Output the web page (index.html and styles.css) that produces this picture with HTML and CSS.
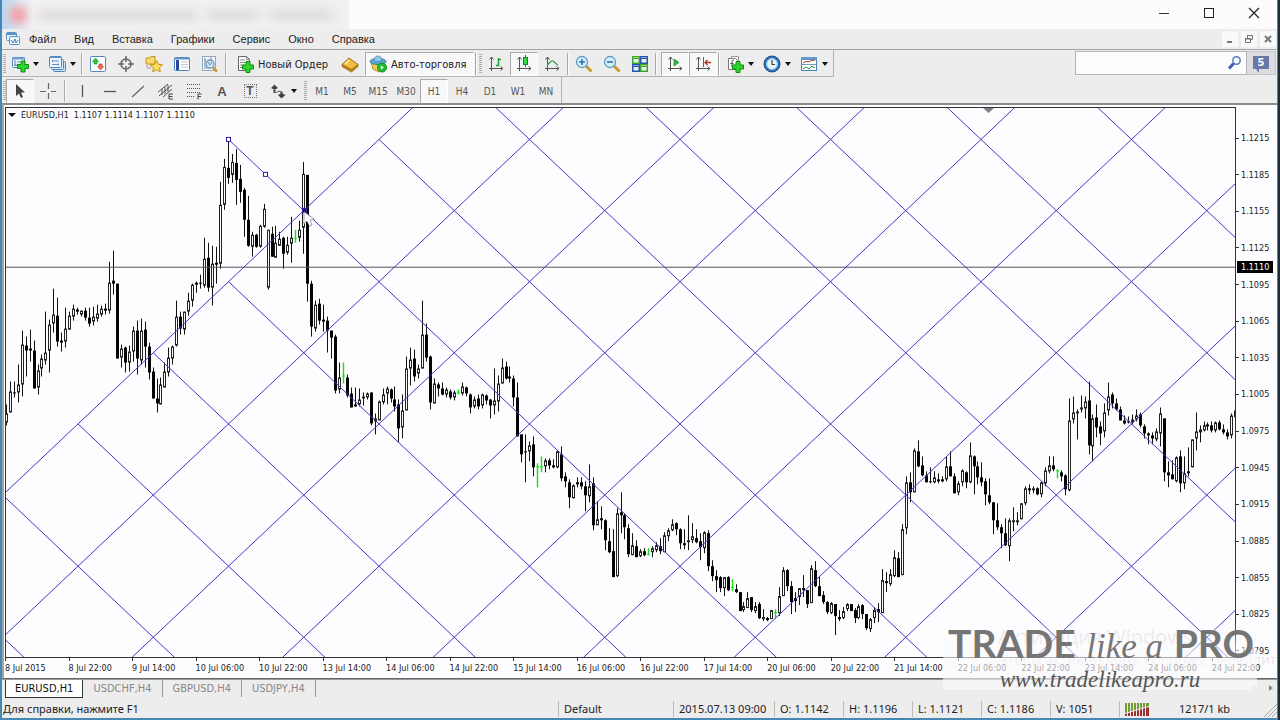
FILE: index.html
```
<!DOCTYPE html>
<html lang="ru">
<head>
  <meta charset="UTF-8">
  <title>EURUSD,H1</title>
  <link rel="stylesheet" href="styles.css">
</head>
<body>
  <div class="window">
    <header class="titlebar">
      <div class="title-blur"><i class="blur-logo"></i><i class="blur-text"></i><i class="blur-text short"></i><i class="blur-text mid"></i></div>
      <div class="win-buttons">
        <button aria-label="Свернуть"><svg width="12" height="12"><path d="M1 6.500h10" stroke="#333" fill="none"/></svg></button>
        <button aria-label="Развернуть"><svg width="12" height="12"><rect x="1.500" y="1.500" width="9" height="9" stroke="#222" fill="none"/></svg></button>
        <button aria-label="Закрыть"><svg width="12" height="12"><path d="M1 1l10 10M11 1L1 11" stroke="#222" stroke-width="1.200" fill="none"/></svg></button>
      </div>
    </header>

    <nav class="menu">
      <svg class="menu-logo" width="16" height="16" viewBox="0 0 16 16"><rect x="1.500" y="1.500" width="10" height="8" rx="1" fill="#eef6fd" stroke="#5b93c9"/><path d="M1 3h11" stroke="#5b93c9" stroke-width="2"/><rect x="4.500" y="5.500" width="10" height="8" rx="1" fill="#eef6fd" stroke="#5b93c9"/><path d="M6 9l2 3 2-4 1 4 2-3" stroke="#4a83bb" fill="none"/></svg>
      <a href="#">Файл</a><a href="#">Вид</a><a href="#">Вставка</a><a href="#">Графики</a><a href="#">Сервис</a><a href="#">Окно</a><a href="#">Справка</a>
      <div class="mdi-buttons">
        <button aria-label="Свернуть окно"><svg width="10" height="10"><path d="M2 8h5" stroke="#777" stroke-width="2"/></svg></button>
        <button aria-label="Восстановить окно"><svg width="10" height="10"><path d="M3.500 4V1.500h5v4H7M1.500 4.500h5v4h-5zM3 1.500h6M1 5h6" stroke="#777" fill="none"/></svg></button>
        <button aria-label="Закрыть окно"><svg width="10" height="10"><path d="M2 2l6 6M8 2L2 8" stroke="#777" stroke-width="2"/></svg></button>
      </div>
    </nav>

    <div class="toolrow">
      <div class="toolbar">
        <i class="grip"></i>
        <button class="tool drop" aria-label="Новый график"><svg width="18" height="18" viewBox="0 0 18 18"><rect x="1.500" y="2.500" width="12" height="10" rx="1" fill="#eef6fd" stroke="#4e86bd"/><path d="M1 3.500h13" stroke="#6ea3d4" stroke-width="2"/><path d="M4 5v6M3 10h7M6 7h3" stroke="#5b86ad" fill="none"/><path d="M10 6h4v3.500h3.500v4H14V17h-4v-3.500H6.500v-4H10z" fill="#2fd42f" stroke="#0c8c12"/></svg><i class="caret"></i></button>
        <button class="tool drop" aria-label="Профили"><svg width="18" height="18" viewBox="0 0 18 18"><rect x="5.500" y="6.500" width="12" height="10" rx="1" fill="#cfe3f5" stroke="#4e86bd"/><rect x="3.500" y="4.500" width="12" height="10" rx="1" fill="#dcebf8" stroke="#4e86bd"/><rect x="1.500" y="1.500" width="12" height="11" rx="1" fill="#eef6fd" stroke="#4e86bd"/><path d="M2 2.500h11M4 6h7M4 9.500h7M4.500 5v2M10.500 8.500v2" stroke="#5f93c6"/></svg><i class="caret"></i></button>
        <i class="sep"></i>
        <button class="tool" aria-label="Обзор рынка"><svg width="18" height="18" viewBox="0 0 18 18"><rect x="1.500" y="1.500" width="15" height="15" rx="1" fill="#fafdff" stroke="#4e86bd"/><path d="M6.500 3l3 3.500H8V9H5V6.500H3.500z" fill="#35c435" stroke="#158a1d" stroke-width=".6"/><path d="M11.500 15l-3-3.500H10V9h3v2.500h1.500z" fill="#f06a4a" stroke="#c22d15" stroke-width=".6"/></svg></button>
        <button class="tool" aria-label="Окно данных"><svg width="18" height="18" viewBox="0 0 18 18"><circle cx="9" cy="9" r="5" fill="none" stroke="#666" stroke-width="1.500"/><path d="M9 1v6M9 11v6M1 9h6M11 9h6" stroke="#666" stroke-width="1.500"/></svg></button>
        <button class="tool" aria-label="Навигатор"><svg width="18" height="18" viewBox="0 0 18 18"><path d="M1 3h4l1-1.500h4V9H1z" fill="#f8dc6a" stroke="#c09420"/><path d="M1 11h2M5 11h2M2 13h4" stroke="#999"/><path d="M11.500 5.500l1.900 3.800 4.100.5-3 2.900.8 4.100-3.800-2-3.700 2 .7-4.100-3-2.900 4.200-.5z" fill="#ffe05a" stroke="#c48f16"/></svg></button>
        <button class="tool" aria-label="Терминал"><svg width="18" height="18" viewBox="0 0 18 18"><rect x="1.500" y="2.500" width="15" height="13" rx="1" fill="#fff" stroke="#4a82bc"/><path d="M2 3.500h14" stroke="#5e94ca" stroke-width="2"/><path d="M4.500 5v10" stroke="#28489a" stroke-width="3"/><path d="M8 7h7M8 9.500h7M8 12h7" stroke="#b7c8dc"/></svg></button>
        <button class="tool" aria-label="Тестер стратегий"><svg width="18" height="18" viewBox="0 0 18 18"><rect x="1.500" y="1.500" width="13" height="14" fill="#f2f6fa" stroke="#91a8bd"/><path d="M4 3v9M3 5h2M10 2v4M3 13h5" stroke="#768da2"/><circle cx="9" cy="9" r="4" fill="#cfe8f8" stroke="#6d93b5" stroke-width="1.300"/><path d="M7 7l2 3 2-3" stroke="#6688a5" fill="none"/><path d="M12 12.500l4 4" stroke="#c9982d" stroke-width="2.500"/></svg></button>
        <i class="sep"></i>
        <button class="tool wide"><svg width="18" height="18" viewBox="0 0 18 18"><path d="M2.500 1.500h8l3 3v11h-11z" fill="#fff" stroke="#666"/><path d="M10.500 1.500v3h3M4 5h5M4 7.500h7M4 10h4M4 12.500h3" stroke="#888" fill="none"/><path d="M10 6.500h4V10h3.500v4H14v3.500h-4V14H6.500v-4H10z" fill="#2fd42f" stroke="#0c8c12"/></svg>Новый Ордер</button>
        <button class="tool" aria-label="MetaEditor"><svg width="18" height="18" viewBox="0 0 18 18"><path d="M1 9.500L8 3l9 6.500-6.500 6.500z" fill="#eebf42" stroke="#9c6b12"/><path d="M1 9.500l9.500 5 6.500-5v2L10.500 17 1 11.500z" fill="#c5871e" stroke="#8d5d10" stroke-width=".7"/><path d="M4 9l4.500-4" stroke="#fff0a6" stroke-width="1.500"/></svg></button>
        <button class="tool wide pressed auto"><svg width="18" height="18" viewBox="0 0 18 18"><path d="M2 7l2 7 6 3 5-8z" fill="#f1cd49" stroke="#b98e21"/><ellipse cx="9" cy="6.500" rx="8" ry="3" fill="#5fa8d6" stroke="#3679a8"/><path d="M5 5.500c0-6 8-6 8 0-2 1.500-6 1.500-8 0z" fill="#8cc9ec" stroke="#3e87b7" stroke-width=".8"/><circle cx="13" cy="12.500" r="4.500" fill="#22bd31" stroke="#0d8a1c"/><path d="M11.800 10.500l3 2-3 2z" fill="#fff"/></svg>Авто-торговля</button>
        <i class="sep"></i>
        <i class="grip"></i>
        <button class="tool" aria-label="Бары"><svg width="18" height="18" viewBox="0 0 18 18"><path d="M4.500 2v14M2 13.500h14M2.500 4.500l2-2.500 2 2.500M13.500 11.500l2.500 2-2.500 2" stroke="#555" fill="none"/><path d="M11.500 3v8M11.500 4.500H14M9 10.500h2.500" stroke="#1c9a35" stroke-width="1.400"/></svg></button>
        <button class="tool pressed" aria-label="Японские свечи"><svg width="18" height="18" viewBox="0 0 18 18"><path d="M4.500 2v14M2 13.500h14M2.500 4.500l2-2.500 2 2.500M13.500 11.500l2.500 2-2.500 2" stroke="#555" fill="none"/><path d="M10.500 0v12" stroke="#13852a"/><rect x="8.500" y="2.500" width="4" height="7" fill="#33d948" stroke="#13852a"/></svg></button>
        <button class="tool" aria-label="Линия"><svg width="18" height="18" viewBox="0 0 18 18"><path d="M4.500 2v14M2 13.500h14M2.500 4.500l2-2.500 2 2.500M13.500 11.500l2.500 2-2.500 2" stroke="#555" fill="none"/><path d="M4 10c3-2 4-5 6-4s2 3 5 4" stroke="#2ba045" stroke-width="1.300" fill="none"/></svg></button>
        <i class="sep"></i>
        <button class="tool" aria-label="Увеличить"><svg width="18" height="18" viewBox="0 0 18 18"><path d="M11 11l5.500 5.500" stroke="#c69a30" stroke-width="3"/><circle cx="7" cy="7" r="5.500" fill="#d8f0fc" stroke="#5b9cc9" stroke-width="1.300"/><path d="M4 7h6M7 4v6" stroke="#2d6fae" stroke-width="1.600"/></svg></button>
        <button class="tool" aria-label="Уменьшить"><svg width="18" height="18" viewBox="0 0 18 18"><path d="M11 11l5.500 5.500" stroke="#c69a30" stroke-width="3"/><circle cx="7" cy="7" r="5.500" fill="#d8f0fc" stroke="#5b9cc9" stroke-width="1.300"/><path d="M4 7h6" stroke="#2d6fae" stroke-width="1.600"/></svg></button>
        <button class="tool" aria-label="Мозаика"><svg width="18" height="18" viewBox="0 0 18 18"><path d="M1 1h8v8H1zM9 9h8v8H9z" fill="#3fa52b"/><path d="M9 1h8v8H9zM1 9h8v8H1z" fill="#2754ad"/><path d="M2.500 4h5v3.500h-5zM10.500 4h5v3.500h-5zM2.500 12h5v3.500h-5zM10.500 12h5v3.500h-5z" fill="#e8f3f4"/><path d="M2 2.500h6M10 10.500h6" stroke="#9edb5e"/><path d="M10 2.500h6M2 10.500h6" stroke="#7ca7e4"/></svg></button>
        <i class="sep"></i>
        <button class="tool pressed after" aria-label="Автопрокрутка"><svg width="18" height="18" viewBox="0 0 18 18"><path d="M4.500 2v14M2 13.500h14M2.500 4.500l2-2.500 2 2.500M13.500 11.500l2.500 2-2.500 2" stroke="#555" fill="none"/><path d="M8 4l5 3.500L8 11z" fill="#2fba47" stroke="#13852a" stroke-width=".7"/></svg></button>
        <button class="tool pressed" aria-label="Сдвиг графика"><svg width="18" height="18" viewBox="0 0 18 18"><path d="M4.500 2v14M2 13.500h14M2.500 4.500l2-2.500 2 2.500M13.500 11.500l2.500 2-2.500 2" stroke="#555" fill="none"/><path d="M9.500 2v10" stroke="#2a6fa8"/><path d="M17 7.500h-6M13.500 5L11 7.500l2.500 2.500" stroke="#b23523" stroke-width="1.300" fill="none"/></svg></button>
        <i class="sep"></i>
        <button class="tool drop" aria-label="Индикаторы"><svg width="18" height="18" viewBox="0 0 18 18"><path d="M5.500 1.500h7v10h-7z" fill="#fff" stroke="#999"/><path d="M2.500 3.500h7l2 2v9h-9z" fill="#fff" stroke="#777"/><path d="M8 5.500c-2-1-2 1-2 3v3.500M4.500 8.500h3" stroke="#444" fill="none"/><path d="M10 6.500h4V10h3.500v4H14v3.500h-4V14H6.500v-4H10z" fill="#2fd42f" stroke="#0c8c12"/></svg><i class="caret"></i></button>
        <button class="tool drop" aria-label="Периоды"><svg width="18" height="18" viewBox="0 0 18 18"><circle cx="9" cy="9" r="8" fill="#2d72b5" stroke="#1d4d83"/><circle cx="9" cy="9" r="5.500" fill="#e5f3fc" stroke="#8bbce4"/><path d="M9 5v4.500h3" stroke="#345" stroke-width="1.200" fill="none"/></svg><i class="caret"></i></button>
        <button class="tool drop" aria-label="Шаблоны"><svg width="18" height="18" viewBox="0 0 18 18"><rect x="1.500" y="2.500" width="15" height="13" fill="#fff" stroke="#4b80b3"/><path d="M1 3.500h16" stroke="#6298cb" stroke-width="3"/><path d="M2 9.500h14" stroke="#7b9ab6"/><path d="M3 8l3-1.500 3 .5 2-1.500 4-.5" stroke="#8f3c2d" fill="none"/><path d="M3 14l3-2 3 2 3-3 3 2" stroke="#1c9a50" fill="none"/></svg><i class="caret"></i></button>
      </div>
      <form class="search">
        <input type="text" aria-label="Поиск">
        <svg class="lens" width="16" height="16" viewBox="0 0 16 16"><circle cx="9.500" cy="5.500" r="3.700" fill="#f5f9ff" stroke="#5878c2" stroke-width="1.500"/><path d="M6.500 8.500l-4.500 5" stroke="#3f5fae" stroke-width="3"/></svg>
        <button type="button"><span class="bubble">5</span></button>
      </form>
    </div>

    <div class="toolrow second">
      <div class="toolbar">
        <i class="grip"></i>
        <button class="tool pressed" aria-label="Курсор"><svg width="18" height="18" viewBox="0 0 18 18"><path d="M5 2v12l3-2.500 2 4.500 2-1-2-4.500h4z" fill="#444"/></svg></button>
        <button class="tool" aria-label="Перекрестие"><svg width="18" height="18" viewBox="0 0 18 18"><path d="M9.500 1v6M9.500 11v6M1 9.500h6M12 9.500h5" stroke="#666" stroke-width="1.200"/></svg></button>
        <i class="sep"></i>
        <button class="tool" aria-label="Вертикальная линия"><svg width="18" height="18" viewBox="0 0 18 18"><path d="M9.500 3v12" stroke="#555" stroke-width="1.300"/></svg></button>
        <button class="tool" aria-label="Горизонтальная линия"><svg width="18" height="18" viewBox="0 0 18 18"><path d="M3 9.500h12" stroke="#555" stroke-width="1.300"/></svg></button>
        <button class="tool" aria-label="Трендовая линия"><svg width="18" height="18" viewBox="0 0 18 18"><path d="M3 15L15 4" stroke="#666" stroke-width="1.300"/></svg></button>
        <button class="tool" aria-label="Канал"><svg width="18" height="18" viewBox="0 0 18 18"><path d="M1 10l10-8M2 14L15 3M6 15l9-8M5 7v6M8 5v7M11 3v7" stroke="#555" fill="none"/><path d="M16 12h-4v5h4M12 14.500h3.500" stroke="#444" fill="none"/></svg></button>
        <button class="tool" aria-label="Линии Фибоначчи"><svg width="18" height="18" viewBox="0 0 18 18"><path d="M2 2.500h14M2 6.500h14M2 10.500h14M2 14.500h8" stroke="#555" stroke-dasharray="1 1"/><path d="M16.500 12H13v5.500M13 14.500h3" stroke="#444" fill="none"/></svg></button>
        <button class="tool letter">A</button>
        <button class="tool letter"><span class="boxed">T</span></button>
        <button class="tool drop" aria-label="Стрелки"><svg width="18" height="18" viewBox="0 0 18 18"><path d="M2 6l3.500-3.500L9 6 5.500 8zM4.500 8h2v3h-2zM9 13l3.500-2 4 2-4 3.500zM11.500 9.500h2V12h-2z" fill="#444"/><path d="M7 11l3-2 2 1" stroke="#555" fill="none"/></svg><i class="caret"></i></button>
        <i class="grip next"></i>
        <button class="tool">M1</button><button class="tool">M5</button><button class="tool">M15</button><button class="tool">M30</button><button class="tool pressed">H1</button><button class="tool">H4</button><button class="tool">D1</button><button class="tool">W1</button><button class="tool">MN</button>
      </div>
    </div>

    <main class="chart">
      <div class="plot">
        <svg id="plot" viewBox="6 108 1229 550" preserveAspectRatio="none">
          <g id="candles"></g>
          <path d="M6 267.500H1235" stroke="#555"/>
          <g id="grid"></g>
          <g fill="#fdfdff" stroke="#2a20a0">
            <rect x="226.500" y="137.500" width="4" height="4"/>
            <rect x="263.500" y="172.500" width="4" height="4"/>
            <rect x="302.500" y="208.500" width="4" height="4" fill="#15106e"/>
          </g>
          <path d="M983 108h11l-5.500 5z" fill="#7e8288"/>
          <path d="M304 212v12l3-2.500 2.500 5 2.500-1.300-2-5 4.500-.7z" fill="#fff" stroke="#667" stroke-width=".6"/>
        </svg>
        <div class="quote"><i class="caret"></i><span>EURUSD,H1</span><span>1.1107 1.1114 1.1107 1.1110</span></div>
      </div>
      <div class="prices">
        <span>1.1215</span><span>1.1185</span><span>1.1155</span><span>1.1125</span><span>1.1095</span><span>1.1065</span><span>1.1035</span><span>1.1005</span><span>1.0975</span><span>1.0945</span><span>1.0915</span><span>1.0885</span><span>1.0855</span><span>1.0825</span><span>1.0795</span>
        <b>1.1110</b>
      </div>
      <div class="times">
        <span>8 Jul 2015</span><span>8 Jul 22:00</span><span>9 Jul 14:00</span><span>10 Jul 06:00</span><span>10 Jul 22:00</span><span>13 Jul 14:00</span><span>14 Jul 06:00</span><span>14 Jul 22:00</span><span>15 Jul 14:00</span><span>16 Jul 06:00</span><span>16 Jul 22:00</span><span>17 Jul 14:00</span><span>20 Jul 06:00</span><span>20 Jul 22:00</span><span>21 Jul 14:00</span><span>22 Jul 06:00</span><span>22 Jul 22:00</span><span>23 Jul 14:00</span><span>24 Jul 06:00</span><span>24 Jul 22:00</span>
      </div>
    </main>

    <div class="tabs">
      <button class="active">EURUSD,H1</button><button>USDCHF,H4</button><button>GBPUSD,H4</button><button>USDJPY,H4</button>
      <div class="tab-arrows"><i></i><i></i></div>
    </div>

    <footer class="status">
      <span class="help">Для справки, нажмите F1</span>
      <span class="profile">Default</span>
      <span class="date">2015.07.13 09:00</span>
      <span class="val">O: 1.1142</span>
      <span class="val">H: 1.1196</span>
      <span class="val">L: 1.1121</span>
      <span class="val">C: 1.1186</span>
      <span class="val">V: 1051</span>
      <span class="net"><svg width="24" height="13" viewBox="0 0 24 13"><path d="M0 0h24v3L0 10z" fill="#6f9a35"/><path d="M0 11l24-7v9H0z" fill="#9c2f2f"/><path d="M2.500 0v13M5.500 0v13M8.500 0v13M11.500 0v13M14.500 0v13M17.500 0v13M20.500 0v13" stroke="#ecebec"/></svg>1217/1 kb</span>
      <svg class="resize" width="14" height="16"><path d="M1 16L14 3M5 16l9-9M9 16l5-5" stroke="#aaa"/></svg>
    </footer>

    <div class="activation"><p>Активация Windows</p><small>Чтобы активировать Windows, перейдите</small></div>
    <div class="watermark">
      <div class="brand"><b>TRADE</b><em>like a</em><b>PRO</b></div>
      <div class="site">www.tradelikeapro.ru</div>
    </div>
  </div>

  <script src="chart.js"></script>
</body>
</html>
```
FILE: styles.css
```
* {
  box-sizing: border-box;
}

html, body {
  height: 100%;
  margin: 0;
  overflow: hidden;
  background: #1d2d38;
}

body {
  font-family: "DejaVu Sans Condensed", "DejaVu Sans", sans-serif;
  font-size: 11px;
  color: #222;
}

button {
  font: inherit;
  color: inherit;
  background: none;
  border: none;
  padding: 0;
  margin: 0;
}

.window {
  position: relative;
  display: flex;
  flex-direction: column;
  height: 100vh;
  margin-right: 2px;
  background: #eeedee;
  border: 1px solid #4687b4;
  border-width: 0 1px 2px 2px;
  overflow: hidden;
}

/* title bar */
.titlebar {
  display: flex;
  flex: 0 0 29px;
  justify-content: space-between;
  background: #fdfbfe;
}

.title-blur {
  display: flex;
  align-items: center;
  gap: 12px;
  width: 347px;
  padding-left: 8px;
  background: linear-gradient(to right, #bcd7f2, #f3f1f3 30px, #f0eff1);
  overflow: hidden;
}

.blur-logo {
  width: 16px;
  height: 16px;
  background: #f4a0a4;
  filter: blur(4px);
}

.blur-text {
  width: 158px;
  height: 10px;
  background: #dcdadc;
  filter: blur(5px);
}

.blur-text.short {
  width: 50px;
}

.blur-text.mid {
  width: 62px;
}

.win-buttons {
  display: flex;
}

.win-buttons button {
  width: 45px;
  padding-right: 2px;
}

/* menu */
.menu {
  display: flex;
  align-items: center;
  flex: 0 0 21px;
  padding-left: 3px;
  border-bottom: 1px solid #a5a4a5;
  font-family: "Liberation Sans", Arial, sans-serif;
  font-size: 11px;
}

.menu-logo {
  margin-right: 8px;
}

.menu a {
  color: #222;
  text-decoration: none;
  margin-right: 18px;
}

.mdi-buttons {
  display: flex;
  gap: 3px;
  margin-left: auto;
  margin-right: 1px;
}

.mdi-buttons button {
  display: flex;
  align-items: center;
  justify-content: center;
  width: 16px;
  height: 16px;
  background: #f9f8fa;
}

/* toolbars */
.toolrow {
  display: flex;
  flex: 0 0 27px;
  justify-content: space-between;
}

.toolbar {
  display: flex;
  align-items: center;
  border: 1px solid #b5b4b5;
  border-width: 0 1px 1px 0;
  padding: 2px 1px 0 0;
}

.toolrow.second {
  flex-basis: 26px;
}

.second .toolbar {
  border-bottom: none;
  color: #555;
  font-size: 10px;
}

.grip {
  width: 3px;
  height: 20px;
  margin: 0 0 0 1px;
  background: repeating-linear-gradient(#aaa 0 1px, #eee 1px 2px);
}

.sep {
  width: 2px;
  height: 22px;
  margin: 0 1px;
  border-left: 1px solid #aaa;
  border-right: 1px solid #fafafa;
}

.second .sep {
  margin: 0 2px;
}

.grip.next {
  margin: 0 1px 0 3px;
}

.tool {
  display: flex;
  align-items: center;
  justify-content: center;
  width: 28px;
  height: 24px;
  white-space: nowrap;
}

.tool svg {
  flex: none;
}

.tool.drop {
  width: 37px;
  gap: 4px;
}

.tool.wide {
  width: auto;
  gap: 4px;
  padding: 0 8px 0 8px;
}

.tool.auto {
  padding: 0 7px 0 3px;
  margin-left: 1px;
}

.tool.pressed {
  background: #f8f8f9;
  border: 1px solid #aaa;
  border-right-color: #fff;
  border-bottom-color: #fff;
}

.tool.after {
  margin-left: 3px;
}

.letter {
  font-family: "Liberation Sans", Arial, sans-serif;
  font-size: 13px;
  font-weight: bold;
}

.boxed {
  width: 13px;
  line-height: 12px;
  border: 1px dotted #777;
  font-size: 12px;
}

.caret {
  border: 3px solid transparent;
  border-top: 4px solid #111;
  border-bottom: none;
}

.search {
  position: relative;
  display: flex;
  height: 24px;
  margin-top: 1px;
  margin-right: 1px;
}

.search input {
  width: 172px;
  border: 1px solid #b4b4b8;
  background: #fdfcfe;
  padding: 0 22px 0 4px;
  outline: none;
}

.lens {
  position: absolute;
  right: 33px;
  top: 4px;
}

.search button {
  display: flex;
  align-items: center;
  justify-content: center;
  width: 29px;
  background: #dddde1;
  border: 1px solid #c4c4c8;
  border-left: none;
}

.bubble {
  position: relative;
  width: 16px;
  line-height: 13px;
  margin-bottom: 2px;
  background: #6878a8;
  color: #fff;
  font-weight: bold;
}

.bubble::after {
  content: "";
  position: absolute;
  left: 3px;
  top: 13px;
  border-top: 4px solid #6878a8;
  border-left: 3px solid transparent;
}

/* chart */
.chart {
  display: grid;
  grid-template-columns: minmax(0, 1fr) 41px;
  grid-template-rows: minmax(0, 1fr) 20px;
  flex: 1;
  min-height: 0;
  background: #fdfdff;
  border-top: 2px solid #8c8b8c;
  border-left: 2px solid #a5a4a5;
  border-bottom: 1px solid #666;
  padding: 2px 0 0 1px;
  font-size: 9px;
  color: #1c1c1c;
}

.plot {
  position: relative;
  border: 1px solid #333;
}

.plot svg {
  display: block;
  width: 100%;
  height: 100%;
}

.quote {
  position: absolute;
  left: 2px;
  top: 1px;
  display: flex;
  align-items: center;
  gap: 5px;
  line-height: 12px;
}

.quote .caret {
  border-width: 4px 4px 0;
}

.prices {
  position: relative;
  display: flex;
  flex-direction: column;
  justify-content: space-between;
  padding-top: 24px;
}

.prices span {
  display: flex;
  align-items: center;
  gap: 2px;
  line-height: 14px;
}

.prices span::before {
  content: "";
  width: 3px;
  height: 1px;
  background: #333;
}

.prices b {
  position: absolute;
  left: 1px;
  top: 28%;
  width: 36px;
  padding-left: 4px;
  line-height: 12px;
  font-weight: normal;
  color: #fff;
  background: #000;
}

.times {
  display: grid;
  grid-template-columns: repeat(20, 5.16%);
  white-space: nowrap;
  line-height: 20px;
}

.times span {
  background: linear-gradient(#333, #333) 0 0 / 1px 3px no-repeat;
}

/* tabs */
.tabs {
  display: flex;
  flex: 0 0 21px;
  align-items: flex-start;
  padding-left: 3px;
  border-top: 1px solid #999;
  color: #888;
}

.tabs button {
  height: 17px;
  padding: 0 10px;
  border-right: 1px solid #999;
}

.tabs .active {
  height: 18px;
  padding: 0 9px;
  background: #fff;
  color: #111;
  border: 1px solid #333;
  border-top: none;
}

.tab-arrows {
  display: flex;
  gap: 14px;
  margin: 5px 4px 0 auto;
}

.tab-arrows i {
  border: 3px solid transparent;
  border-left: 4px solid #888;
  border-right: none;
}

.tab-arrows i:first-child {
  border-left: none;
  border-right: 4px solid #ccc;
}

/* status bar */
.status {
  display: flex;
  flex: 0 0 18px;
  align-items: center;
  font-family: "Noto Sans", sans-serif;
  font-size: 11px;
  line-height: 16px;
}

.status span {
  padding-left: 5px;
  border-left: 1px solid #bbb;
}

.status .help {
  flex: 1;
  padding-left: 1px;
  border: none;
}

.status .profile {
  width: 115px;
}

.status .date {
  width: 101px;
}

.status .val {
  width: 69px;
}

.status .net {
  display: flex;
  align-items: center;
  gap: 30px;
  width: 144px;
}

/* logo over the corner */
.watermark {
  position: absolute;
  right: 20px;
  bottom: 28px;
  width: 314px;
  height: 68px;
  background: linear-gradient(transparent, rgba(250, 250, 252, 0.6) 30px);
  color: #757576;
}

.brand {
  display: flex;
  align-items: baseline;
  justify-content: space-between;
  padding: 0 3px 0 5px;
  font-family: Lato, sans-serif;
  font-size: 39px;
  line-height: 42px;
}

.brand em {
  font-family: "Liberation Serif", serif;
  font-size: 35px;
}

.site {
  font-family: "Liberation Serif", serif;
  font-size: 23px;
  font-style: italic;
  line-height: 24px;
  text-align: center;
  color: #555;
}

.activation {
  position: absolute;
  left: calc(100% - 279px);
  bottom: 48px;
  font-family: "Open Sans", sans-serif;
  color: rgba(120, 120, 125, 0.2);
  white-space: nowrap;
}

.activation p {
  margin: 0;
  font-size: 20px;
  line-height: 26px;
}

.activation small {
  font-size: 14px;
  line-height: 20px;
}
```
FILE: chart.js
```
const NS = "http://www.w3.org/2000/svg";

// one bar per entry: high, body top, body bottom, low, kind (w up, b down, g doji)
const bars = `
405 414 423 426 w|382 392 413 413 w|382 393 394 398 b|365 385 393 403 w|331 345 385 397 w|337 346 351 377 b|330 349 351 362 b|341 351 389 389 b
365 371 388 395 w|355 359 369 377 w|312 353 361 365 w|320 325 351 373 w|289 315 324 333 w|298 316 342 347 b|333 341 343 352 b|308 329 342 348 w
312 316 330 330 w|305 309 317 321 w|308 310 312 315 b|311 311 315 317 w|308 311 318 321 b|308 318 324 327 b|307 317 322 326 w|305 314 319 322 w
306 309 315 317 w|304 309 311 315 b|262 283 311 314 w|251 281 284 295 b|284 284 359 359 b|345 349 358 368 w|347 348 363 373 b|346 352 363 372 w
327 331 352 362 w|321 331 359 375 b|319 331 361 365 w|322 330 347 368 b|343 347 373 380 b|368 372 399 399 b|379 399 404 413 b|378 385 405 405 w
363 372 388 388 w|348 358 373 377 w|346 347 359 365 w|301 317 346 347 w|312 317 329 335 b|312 312 330 335 w|293 301 312 316 w|284 285 301 307 w
282 283 285 293 b|275 283 284 289 b|238 259 286 288 w|243 258 288 292 b|246 264 288 306 w|247 263 265 284 b|182 205 264 269 w|159 167 205 210 w
139 168 178 184 b|154 162 175 183 w|149 163 180 205 b|165 179 192 203 b|188 190 220 237 b|196 220 246 247 b|232 235 247 257 w|234 235 247 248 b
225 226 247 248 w|204 209 227 228 w|230 230 288 290 w|227 234 257 257 b|226 243 258 258 w|232 239 246 246 w|237 238 254 269 b|237 245 253 255 w
217 238 244 263 w|230 238 240 243 g|221 230 238 242 w|162 174 228 254 w|175 175 284 302 b|281 284 327 337 b|301 305 329 332 w|299 304 321 325 b
305 320 322 332 b|317 321 331 353 b|331 331 338 359 b|335 337 391 394 b|363 378 390 394 w|363 376 378 384 g|375 378 396 398 b|388 394 408 408 b
388 405 407 407 b|389 400 405 407 w|393 397 399 406 w|393 394 398 400 w|393 393 424 426 b|414 419 422 435 w|401 402 421 421 w|389 395 403 405 w
387 389 394 405 w|389 390 399 403 b|387 400 407 412 b|400 405 429 443 b|395 411 428 439 w|357 369 411 411 w|348 360 369 386 w|350 359 377 382 b
365 369 374 379 w|301 335 369 369 w|324 335 358 362 b|356 357 403 410 b|379 384 404 404 w|383 385 389 397 b|383 389 395 396 b|388 390 395 398 w
390 392 398 400 b|391 393 398 401 w|390 393 394 395 g|383 387 394 396 w|387 388 394 397 b|394 395 408 414 b|397 400 407 409 w|395 399 407 410 b
394 395 406 409 w|395 396 401 405 b|400 400 406 419 b|369 401 406 415 w|376 384 402 412 w|359 368 384 384 w|362 367 379 380 b|367 377 379 383 b
376 379 398 407 b|383 398 437 437 b|435 435 455 463 b|435 452 453 483 b|442 446 452 462 w|437 445 468 477 b|464 467 468 488 g|457 467 468 473 g
459 461 467 473 w|459 461 466 470 b|460 466 468 469 b|451 452 468 469 w|447 455 479 482 b|473 477 482 488 b|480 483 498 509 b|485 486 499 499 w
478 483 485 488 b|478 483 487 490 b|482 487 496 512 b|465 487 497 503 w|478 484 526 531 b|502 520 526 526 w|507 519 521 530 b|520 521 541 551 b
529 542 553 554 b|530 552 578 578 b|509 514 577 578 w|493 513 516 534 b|514 516 528 540 b|525 529 555 558 b|534 546 556 556 w|541 547 558 558 b
550 552 557 558 w|549 552 556 557 b|549 555 556 556 g|547 549 553 558 w|543 546 551 553 w|539 547 552 555 b|533 536 553 553 w|529 531 537 542 w
520 525 531 532 w|523 524 530 536 b|529 530 544 550 b|530 544 546 550 b|516 541 542 551 w|524 537 541 544 w|530 539 543 544 b|534 542 548 561 b
532 533 549 554 w|531 534 567 572 b|561 567 577 582 b|571 577 581 593 b|577 578 589 593 b|578 578 589 597 w|577 578 591 592 b|580 588 589 592 g
585 590 593 594 b|593 593 612 612 b|603 607 611 613 w|593 599 609 609 w|598 598 611 613 b|603 607 612 614 w|603 605 619 620 b|610 618 620 622 w
618 619 621 622 b|611 611 620 620 w|610 613 614 619 g|588 597 614 617 w|568 571 597 597 w|570 571 587 592 b|582 587 603 615 b|593 599 602 613 b
589 589 598 606 w|576 589 591 598 b|591 591 605 609 b|566 569 604 604 w|562 571 587 588 b|577 587 597 597 b|592 596 603 605 b|602 603 613 615 b
603 604 614 615 w|605 605 617 636 b|611 618 620 622 b|608 612 619 620 w|604 605 610 612 w|605 605 612 612 b|609 611 619 624 b|605 607 619 620 w
605 606 615 620 b|615 615 629 631 b|619 620 630 633 w|608 611 619 624 w|604 610 613 623 b|570 581 614 614 w|573 582 584 593 b|570 575 585 587 w
551 558 577 578 w|553 559 578 578 b|525 530 576 576 w|477 483 529 535 w|473 483 493 503 b|449 451 493 493 w|441 452 467 468 b|457 466 476 477 b
472 476 483 483 b|468 482 483 484 b|472 478 483 484 w|474 480 482 484 b|477 480 482 483 b|457 467 480 482 w|452 467 477 477 b|474 477 494 494 b
482 484 493 496 w|470 471 483 487 w|472 473 483 489 b|443 456 483 484 w|456 457 467 495 b|462 467 478 485 b|463 478 483 487 b|479 482 495 506 b
479 496 503 505 b|503 503 521 535 b|504 521 528 531 b|525 528 534 549 b|519 534 546 547 b|519 521 547 562 w|508 521 523 532 w|513 521 523 526 w
504 504 520 520 w|487 489 504 506 w|485 489 491 495 b|487 489 491 494 w|488 489 495 496 b|482 483 495 498 w|468 471 484 487 w|457 466 472 474 w
457 466 470 472 b|470 471 472 479 g|471 473 477 482 b|475 476 490 496 b|399 421 491 492 w|397 413 420 424 w|410 412 414 440 w|396 408 410 413 w
397 402 409 419 w|382 401 446 455 b|415 419 447 462 w|405 418 428 438 b|422 427 434 446 b|404 413 432 438 w|383 397 411 416 w|393 395 404 409 b
399 404 410 411 b|407 410 421 421 b|416 421 424 425 b|417 422 423 424 b|415 420 423 425 w|410 416 420 422 w|413 415 426 428 b|425 427 434 439 b
433 434 436 445 b|433 436 439 445 b|429 432 440 442 w|408 414 434 447 w|419 419 473 482 b|462 473 476 488 b|461 475 480 480 b|457 458 482 483 w
451 457 484 493 b|457 474 484 490 w|448 472 474 477 b|440 440 468 468 w|413 432 439 451 w|426 430 433 443 w|422 426 431 432 w|423 425 427 431 b
422 426 431 433 b|422 423 431 433 w|421 423 430 431 b|425 430 433 435 b|430 433 437 440 b|414 416 436 439 w|405 411 418 422 w
`.trim().split(/[|\n]/);

function add(parent, name, attrs) {
  const el = document.createElementNS(NS, name);
  for (const key in attrs) el.setAttribute(key, attrs[key]);
  parent.appendChild(el);
}

function drawBars() {
  const g = document.getElementById("candles");
  bars.forEach((bar, i) => {
    const [high, top, bottom, low, kind] = bar.split(" ");
    const x = Math.floor(6.3 + i * 3.966) + 0.5;
    const color = kind === "g" ? "#12e612" : "#111";
    add(g, "path", { d: `M${x} ${high}V${low}`, stroke: color, "stroke-width": kind === "g" ? 1.4 : 1 });
    if (kind === "g") {
      add(g, "path", { d: `M${x - 1.5} ${+top + 0.5}h3`, stroke: color });
    } else if (kind === "b") {
      add(g, "rect", { x: x - 1.5, y: top, width: 3, height: Math.max(1, bottom - top), fill: "#050505" });
    } else {
      add(g, "rect", { x: x - 1, y: +top + 0.5, width: 2, height: Math.max(1, bottom - top - 1), fill: "#fff", stroke: "#222" });
    }
  });
}

// Gann grid: anchor point and half of a cell
function drawGrid() {
  const g = document.getElementById("grid");
  const x0 = 228.5, y0 = 139.5, dx = 75.25, dy = 71.25;
  const style = { stroke: "#4036c4", "stroke-width": 1, "shape-rendering": "crispEdges" };
  for (let k = 0; k < 13; k++) {
    // rising lines, each two half cells to the right of the last
    const x = x0 + dx * (2 * k + 2);
    add(g, "path", { d: `M${x - 20 * dx} ${y0 + 20 * dy}L${x + dx} ${y0 - dy}`, ...style });
  }
  for (let k = -6; k < 13; k++) {
    // falling lines start on the first rising line
    const sx = k === 0 ? x0 : x0 + dx * (k + 1);
    const sy = k === 0 ? y0 : y0 - dy * (k - 1);
    add(g, "path", { d: `M${sx} ${sy}L${sx + 20 * dx} ${sy + 20 * dy}`, ...style });
  }
}

drawBars();
drawGrid();
```
